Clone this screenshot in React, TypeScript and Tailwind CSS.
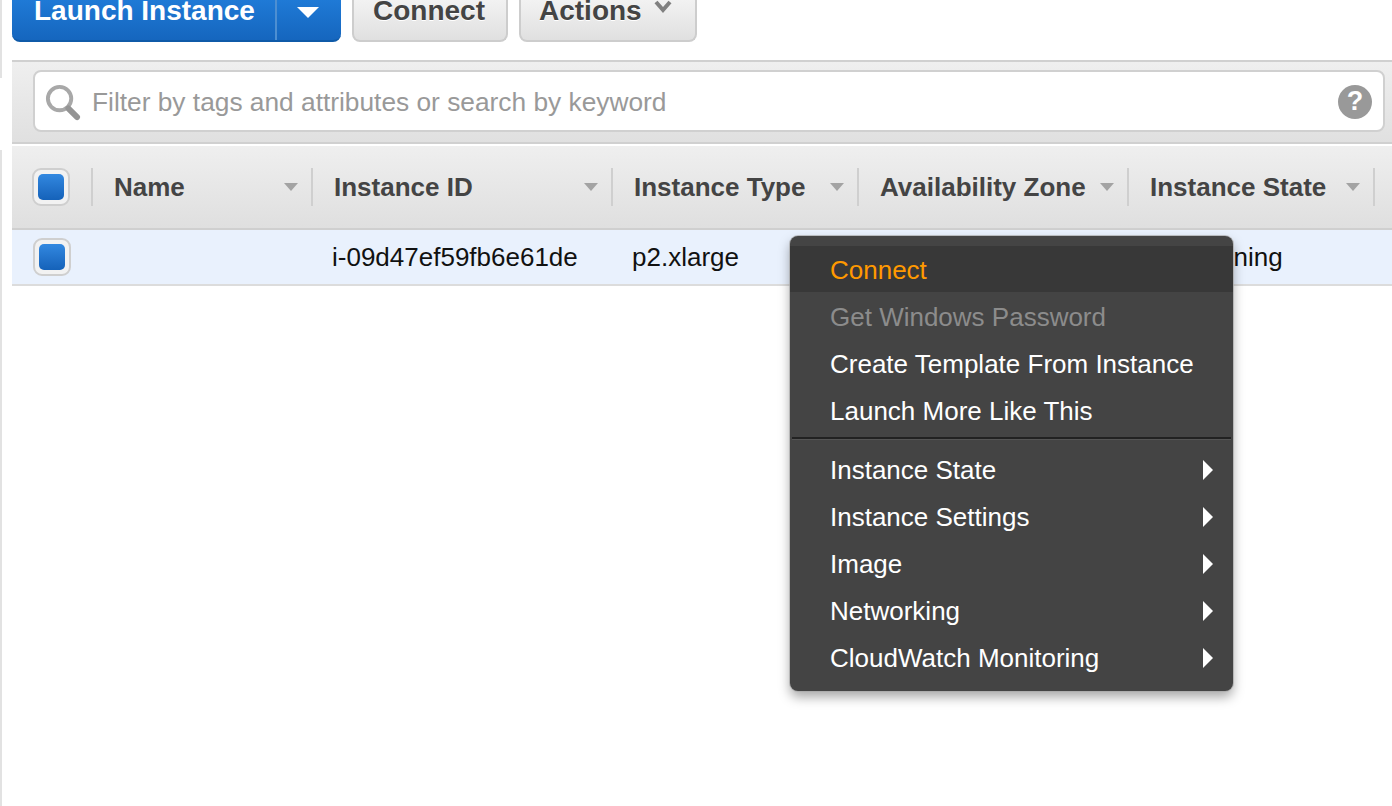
import { useState } from "react";

const menuTop = ["Get Windows Password", "Create Template From Instance", "Launch More Like This"];
const menuSub = ["Instance State", "Instance Settings", "Image", "Networking", "CloudWatch Monitoring"];

const columns = [
  { label: "Name", width: "w-[220px]" },
  { label: "Instance ID", width: "w-[300px]" },
  { label: "Instance Type", width: "w-[246px]" },
  { label: "Availability Zone", width: "w-[270px]" },
  { label: "Instance State", width: "w-[246px]" },
];

function SortCaret() {
  return (
    <svg width="16" height="8" viewBox="0 0 16 8" className="shrink-0">
      <polygon points="1,0 15,0 8,8" fill="#a3a3a3" />
    </svg>
  );
}

function Checkbox({ checked }: { readonly checked: boolean }) {
  return (
    <div className="flex h-[38px] w-[38px] items-center justify-center rounded-[9px] border-2 border-[#cfcfcf] bg-[#f2f2f2]">
      {checked && (
        <div className="h-[26px] w-[26px] rounded-[5px] bg-gradient-to-b from-[#3288e0] to-[#1562b9]" />
      )}
    </div>
  );
}

function GrayButton({ label, children, className }: { readonly label: string; readonly children?: React.ReactNode; readonly className: string }) {
  return (
    <div className={`flex h-[42px] ${className} items-start gap-[12px] rounded-b-[8px] border-x-2 border-b-2 border-[#cdcdcd] bg-gradient-to-b from-[#f2f2f2] to-[#e0e0e0] text-[28px] leading-[21px] font-bold text-[#444] [text-shadow:0_1px_0_#fff]`}>
      <span>{label}</span>
      {children}
    </div>
  );
}

export default function App() {
  const [query, setQuery] = useState("");

  return (
    <div className="flex h-[806px] w-[1392px] overflow-hidden bg-white font-['Liberation_Sans',Arial,sans-serif]">
      <div className="flex w-[12px] shrink-0 flex-col">
        <div className="h-[78px] border-l-2 border-[#e2e2e2]" />
        <div className="h-[72px]" />
        <div className="flex-1 border-l-2 border-[#e2e2e2]" />
      </div>

      <div className="relative flex min-w-0 flex-1 flex-col">
        <div className="flex h-[42px] gap-[11px]">
          <div className="flex h-[42px] w-[329px] rounded-b-[8px] border-b-2 border-[#0f5aa8] bg-gradient-to-b from-[#1f7ad6] to-[#1566be] text-white">
            <div className="w-[263px] pl-[22px] text-[28px] leading-[21px] font-bold">Launch Instance</div>
            <div className="flex flex-1 justify-center border-l-2 border-[#4d8fd2] pt-[7px] pr-[2px]">
              <svg width="22" height="11" viewBox="0 0 22 11">
                <polygon points="0,0 22,0 11,11" fill="#fff" />
              </svg>
            </div>
          </div>
          <GrayButton label="Connect" className="w-[156px] pl-[19px]" />
          <GrayButton label="Actions" className="w-[178px] pl-[18px]">
            <svg width="18" height="14" viewBox="0 0 18 14">
              <polyline points="2,2 9,10 16,2" fill="none" stroke="#808080" strokeWidth="4" />
            </svg>
          </GrayButton>
        </div>

        <div className="mt-[18px] flex h-[84px] items-start border-y-2 border-[#d0d0d0] bg-gradient-to-b from-[#efefef] to-[#e0e0e0] pt-[8px] pl-[21px]">
          <div className="flex h-[62px] w-[1352px] items-center rounded-[8px] border-2 border-[#d0d0d0] bg-white pr-[11px] pl-[9px]">
            <svg width="37" height="37" viewBox="0 0 38 38" className="mt-[2px] shrink-0">
              <circle cx="16" cy="15" r="12" fill="none" stroke="#a8a8a8" strokeWidth="4" />
              <line x1="25" y1="25" x2="34" y2="34" stroke="#949494" strokeWidth="6" strokeLinecap="round" />
            </svg>
            <input
              value={query}
              onChange={(event) => setQuery(event.target.value)}
              placeholder="Filter by tags and attributes or search by keyword"
              className="mt-[4px] ml-[11px] min-w-0 flex-1 bg-transparent text-[26.3px] text-[#444] outline-none placeholder:text-[#999]"
            />
            <div className="mt-[1px] flex h-[34px] w-[34px] shrink-0 items-center justify-center rounded-full bg-[#999] text-[27px] font-bold text-white">
              ?
            </div>
          </div>
        </div>

        <div className="mt-[2px] flex h-[84px] items-center border-b-2 border-[#cfcfcf] bg-gradient-to-b from-[#efefef] to-[#dfdfdf]">
          <div className="flex w-[79px] shrink-0 pl-[20px]">
            <Checkbox checked />
          </div>
          {columns.map((column) => (
            <div key={column.label} className={`flex h-[38px] ${column.width} shrink-0 items-center justify-between border-l-2 border-[#cfcfcf] pr-[12px] pl-[21px] text-[26px] leading-[40px] font-bold text-[#444]`}>
              <span>{column.label}</span>
              <SortCaret />
            </div>
          ))}
          <div className="h-[38px] border-l-2 border-[#cfcfcf]" />
        </div>

        <div className="flex h-[56px] items-center border-b-2 border-[#dcdcdc] bg-[#e9f1fd] text-[26px] leading-[32px] text-[#111]">
          <div className="w-[300px] shrink-0 pl-[21px]">
            <Checkbox checked />
          </div>
          <div className="w-[300px] shrink-0 pl-[20px]">i-09d47ef59fb6e61de</div>
          <div className="w-[246px] shrink-0 pl-[20px]">p2.xlarge</div>
          <div className="w-[338px] shrink-0" />
          <div>running</div>
        </div>

        <div className="absolute top-[236px] left-[778px] w-[443px] overflow-hidden rounded-[8px] bg-[#444] pt-[10px] text-[26px] leading-[47px] text-white shadow-[0_0_0_1px_rgba(170,170,170,0.7),0_6px_12px_rgba(0,0,0,0.35)]">
          <div className="h-[46px] bg-[#383838] pl-[40px] leading-[49px] text-[#ff9900]">Connect</div>
          <div className="pt-[2px]">
            {menuTop.map((item, index) => (
              <div key={item} className={`h-[47px] pl-[40px] ${index === 0 ? "text-[#8c8c8c]" : ""}`}>
                {item}
              </div>
            ))}
          </div>
          <div className="mx-[2px] mt-[2px] h-[3px] border-t-2 border-[#222] bg-[#555]" />
          <div className="pt-[7px] pb-[9px]">
            {menuSub.map((item) => (
              <div key={item} className="flex h-[47px] items-center justify-between pr-[20px] pl-[40px]">
                <span>{item}</span>
                <svg width="10" height="20" viewBox="0 0 10 20" className="-mt-[1px]">
                  <polygon points="0,0 10,10 0,20" fill="#fff" />
                </svg>
              </div>
            ))}
          </div>
        </div>
      </div>
    </div>
  );
}
